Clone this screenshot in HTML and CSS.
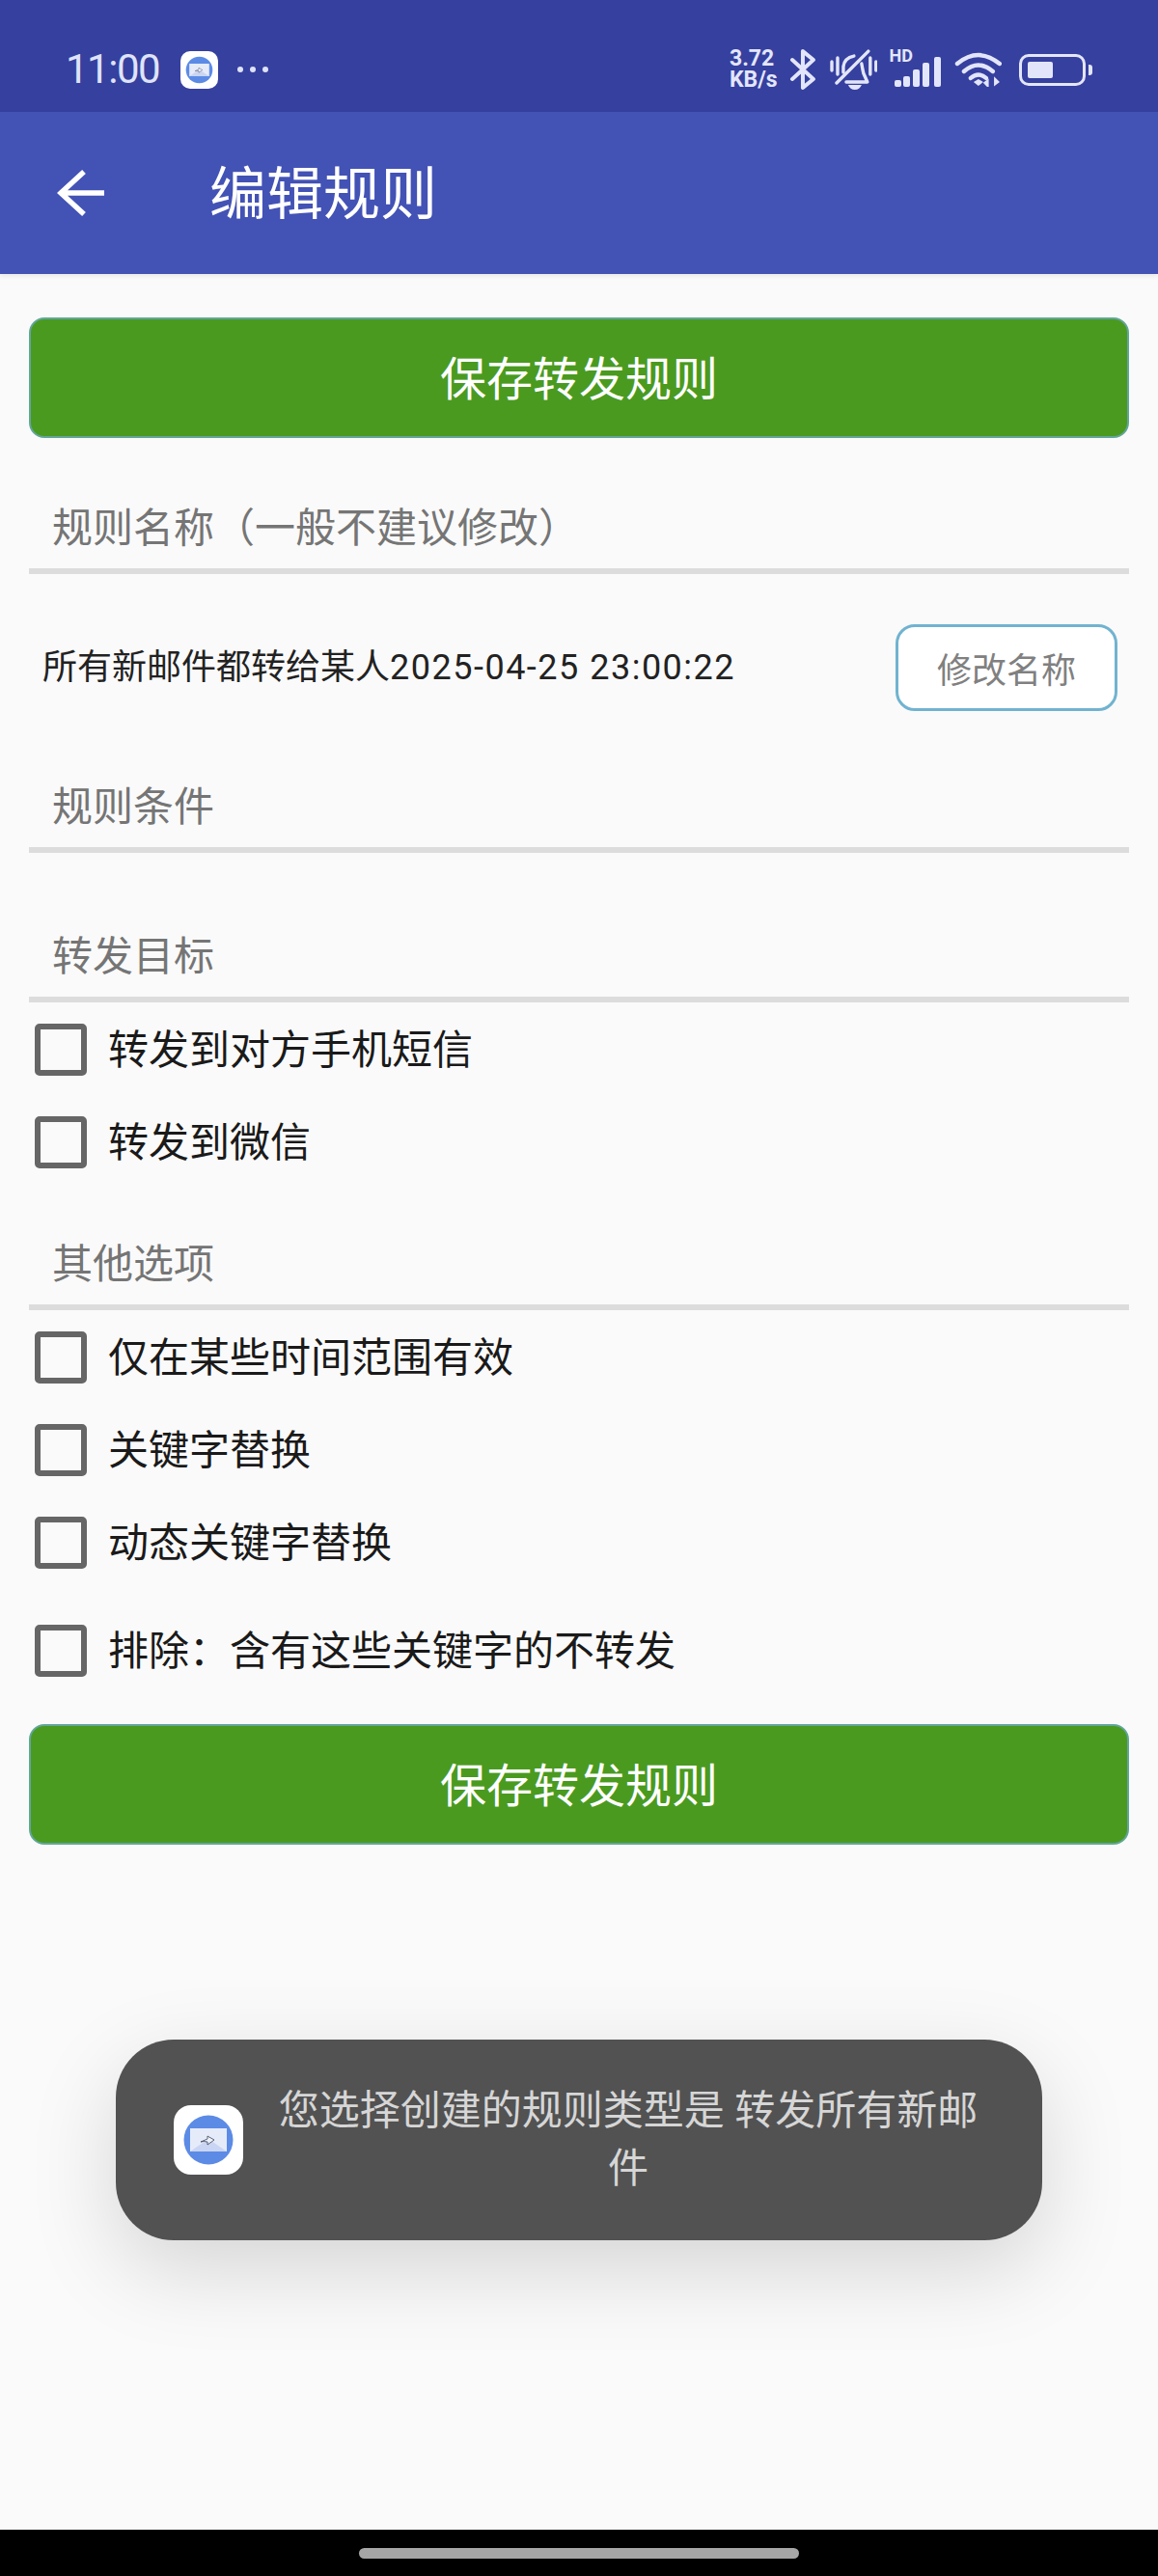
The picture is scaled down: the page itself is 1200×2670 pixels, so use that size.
FILE: index.html
```html
<!DOCTYPE html>
<html lang="zh-CN">
<head>
    <meta charset="UTF-8">
    <meta name="viewport" content="width=device-width, initial-scale=1.0">
    <title>编辑规则</title>
    <link rel="stylesheet" href="styles.css">
</head>
<body>
    <svg class="sprites" width="0" height="0">
        <symbol id="appLogo" viewBox="0 0 72 72">
            <circle cx="36" cy="36" r="25.5" fill="#5c8be6"/>
            <rect x="17" y="24" width="38" height="24" fill="#e6ebfa"/>
            <path d="M17 48 L36 35 L55 48 Z" fill="#c9d5f3"/>
            <path d="M28 38 L35 35 V32 L42 36 L35 41 V38 Q31 37 28 38 Z" fill="#eef2fc" stroke="#3c4258" stroke-width="0.8"/>
        </symbol>
    </svg>

    <div class="status-bar">
        <div class="status-left">
            <span class="clock">11:00</span>
            <span class="status-app"><svg width="39" height="39"><use href="#appLogo"/></svg></span>
            <span class="status-dots"><i></i><i></i><i></i></span>
        </div>
        <div class="status-right">
            <div class="net-speed"><span>3.72</span><span>KB/s</span></div>
            <svg class="ic-bt" width="28" height="42" viewBox="0 0 28 42">
                <path d="M3 11 L25 31 L14 40 V2 L25 11 L3 31" fill="none" stroke="#e3e6fa" stroke-width="4" stroke-linejoin="round" stroke-linecap="round"/>
            </svg>
            <svg class="ic-bell" width="50" height="42" viewBox="0 0 50 42">
                <g fill="none" stroke="#e3e6fa" stroke-width="3.4" stroke-linecap="round" stroke-linejoin="round">
                    <path d="M2 13 V22 M8 9 V26 M42 9 V26 M48 13 V22"/>
                    <path d="M7 35 L40 2"/>
                    <path d="M14 24 V18 Q15 9 25 7 M33 15 Q34 21 35 25 L39 34 H17"/>
                </g>
                <path d="M19 37 H33 Q31 42 26 42 Q21 42 19 37 Z" fill="#e3e6fa"/>
            </svg>
            <div class="signal">
                <span class="signal-hd">HD</span>
                <svg width="49" height="31" viewBox="0 0 49 31" fill="#e3e6fa">
                    <rect x="0" y="24" width="7" height="7" rx="2"/>
                    <rect x="9" y="20" width="7" height="11" rx="2"/>
                    <rect x="19" y="13" width="7" height="18" rx="2"/>
                    <rect x="29" y="6" width="7" height="25" rx="2"/>
                    <rect x="41" y="0" width="7" height="31" rx="2"/>
                </svg>
            </div>
            <svg class="ic-wifi" width="50" height="36" viewBox="0 0 50 36">
                <g fill="none" stroke="#e3e6fa" stroke-width="4.4" stroke-linecap="round">
                    <path d="M3 12 Q25 -6 47 12"/>
                    <path d="M10 20 Q25 7 40 20"/>
                    <path d="M17 27 Q25 20 33 27"/>
                </g>
                <path d="M20 31 L25 28 L30 31 L25 35 Z" fill="#e3e6fa"/>
                <path d="M35 36 V29 L31 32 Z M42 27 V34 L46 31 Z" fill="#e3e6fa" stroke="#e3e6fa" stroke-width="1.5"/>
            </svg>
            <div class="battery">
                <div class="battery-body"><div class="battery-fill"></div></div>
                <div class="battery-tip"></div>
            </div>
        </div>
    </div>

    <header class="app-bar">
        <svg class="back-arrow" width="50" height="50" viewBox="0 0 50 50">
            <path d="M3 25 H49 M28 3 L4 25 L28 47" fill="none" stroke="#fff" stroke-width="5.5"/>
        </svg>
        <h1>编辑规则</h1>
    </header>

    <main class="content">
        <button class="save-btn">保存转发规则</button>

        <div class="section-title first">规则名称（一般不建议修改）</div>
        <div class="name-row">
            <span class="rule-name">所有新邮件都转给某人<span class="rule-date">2025-04-25 23:00:22</span></span>
            <button class="rename-btn">修改名称</button>
        </div>

        <div class="section-title cond">规则条件</div>

        <div class="section-title target">转发目标</div>
        <ul class="check-list">
            <li class="check-row"><span class="box"></span><span class="check-label">转发到对方手机短信</span></li>
            <li class="check-row"><span class="box"></span><span class="check-label">转发到微信</span></li>
        </ul>

        <div class="section-title other">其他选项</div>
        <ul class="check-list">
            <li class="check-row"><span class="box"></span><span class="check-label">仅在某些时间范围有效</span></li>
            <li class="check-row"><span class="box"></span><span class="check-label">关键字替换</span></li>
            <li class="check-row"><span class="box"></span><span class="check-label">动态关键字替换</span></li>
            <li class="check-row exclude"><span class="box"></span><span class="check-label">排除：含有这些关键字的不转发</span></li>
        </ul>

        <button class="save-btn bottom">保存转发规则</button>
    </main>

    <div class="nav-bar"><div class="nav-pill"></div></div>

    <div class="toast">
        <span class="toast-icon"><svg width="72" height="72"><use href="#appLogo"/></svg></span>
        <p>您选择创建的规则类型是 转发所有新邮件</p>
    </div>
</body>
</html>
```

FILE: styles.css
```css
* {
    box-sizing: border-box;
}
body {
    position: relative;
    display: flex;
    flex-direction: column;
    width: 1200px;
    height: 2670px;
    margin: 0;
    overflow: hidden;
    background: #fafafa;
    color: #1a1a1a;
    font-family: Roboto, "Noto Sans CJK SC", sans-serif;
}
.sprites {
    position: absolute;
}

/* status bar */
.status-bar {
    display: flex;
    justify-content: space-between;
    align-items: center;
    height: 116px;
    padding: 28px 68px 0 68px;
    background: #36409f;
    color: #e3e6fa;
}
.status-left {
    display: flex;
    align-items: center;
}
.clock {
    font-size: 42px;
    line-height: 50px;
    letter-spacing: -1.5px;
    color: #dfe3f8;
}
.status-app {
    display: flex;
    width: 39px;
    height: 39px;
    margin-left: 22px;
    background: #fff;
    border-radius: 10px;
}
.status-dots {
    display: flex;
    gap: 7px;
    margin-left: 20px;
}
.status-dots i {
    width: 6px;
    height: 6px;
    background: #dfe3f8;
    border-radius: 50%;
}
.status-right {
    display: flex;
    align-items: center;
    width: 376px;
}
.net-speed {
    display: flex;
    flex-direction: column;
    width: 51px;
    font-size: 23px;
    font-weight: 700;
    line-height: 22px;
}
.ic-bt {
    margin-left: 11px;
}
.ic-bell {
    margin-left: 14px;
}
.signal {
    display: flex;
    align-items: flex-end;
    position: relative;
    width: 55px;
    height: 36px;
    margin-left: 12px;
    justify-content: flex-end;
}
.signal-hd {
    position: absolute;
    left: 0;
    top: -4px;
    font-size: 18px;
    font-weight: 700;
    line-height: 16px;
}
.ic-wifi {
    margin-left: 13px;
}
.battery {
    display: flex;
    align-items: center;
    margin-left: 17px;
}
.battery-body {
    width: 69px;
    height: 33px;
    padding: 5px 6px;
    border: 3px solid #e3e6fa;
    border-radius: 10px;
}
.battery-fill {
    width: 26px;
    height: 100%;
    background: #e3e6fa;
    border-radius: 2px;
}
.battery-tip {
    width: 4px;
    height: 11px;
    margin-left: 3px;
    background: #e3e6fa;
    border-radius: 0 3px 3px 0;
}

/* app bar */
.app-bar {
    display: flex;
    align-items: center;
    height: 168px;
    padding-left: 59px;
    background: #4352b5;
    box-shadow: 0 2px 5px rgba(0, 0, 0, 0.08);
}
.app-bar h1 {
    margin: 4px 0 0 108px;
    font-size: 59px;
    font-weight: 400;
    line-height: 80px;
    color: #fff;
}

/* form */
.content {
    flex: 1;
    padding: 45px 30px 0;
}
.save-btn {
    display: block;
    width: 100%;
    height: 125px;
    padding: 0 0 6px;
    font-family: inherit;
    font-size: 48px;
    color: #fff;
    background: #4a9a20;
    border: 2px solid #62a69a;
    border-radius: 16px;
}
.save-btn.bottom {
    margin-top: 30px;
}
.section-title {
    height: 78px;
    padding-left: 24px;
    font-size: 42px;
    line-height: 62px;
    color: #757575;
    border-bottom: 6px solid #dcdcdc;
}
.section-title.first {
    margin-top: 63px;
}
.section-title.cond {
    margin-top: 69px;
}
.section-title.target {
    margin-top: 77px;
}
.section-title.other {
    margin-top: 50px;
}
.name-row {
    display: flex;
    justify-content: space-between;
    align-items: center;
    margin-top: 52px;
    padding: 0 12px 0 14px;
}
.rule-name {
    font-size: 36px;
    line-height: 50px;
    color: #222;
}
.rule-date {
    letter-spacing: 1.5px;
}
.rename-btn {
    width: 230px;
    height: 90px;
    padding: 0;
    font-family: inherit;
    font-size: 36px;
    color: #808080;
    background: #fff;
    border: 3px solid #71b3d0;
    border-radius: 20px;
}
.check-list {
    display: flex;
    flex-direction: column;
    gap: 4px;
    margin: 0;
    padding: 3px 0 0;
    list-style: none;
}
.check-row {
    display: flex;
    align-items: center;
    height: 92px;
    padding-left: 6px;
    font-size: 42px;
    color: #1a1a1a;
}
.check-row.exclude {
    margin-top: 16px;
}
.check-label {
    margin-bottom: 7px;
}
.box {
    flex-shrink: 0;
    width: 54px;
    height: 54px;
    margin-right: 22px;
    border: 6px solid #666;
    border-radius: 5px;
}

/* nav bar */
.nav-bar {
    display: flex;
    justify-content: center;
    height: 48px;
    padding-top: 19px;
    background: #000;
}
.nav-pill {
    width: 456px;
    height: 11px;
    background: #a6a6a6;
    border-radius: 6px;
}

/* toast lies over the form */
.toast {
    position: absolute;
    left: 120px;
    top: 2114px;
    display: flex;
    align-items: center;
    width: 960px;
    height: 208px;
    padding-left: 60px;
    background: #525252;
    border-radius: 60px;
    box-shadow: 0 30px 90px rgba(0, 0, 0, 0.15);
}
.toast-icon {
    display: flex;
    flex-shrink: 0;
    width: 72px;
    height: 72px;
    background: #fff;
    border-radius: 18px;
}
.toast p {
    width: 740px;
    margin: 0 0 0 29px;
    font-size: 42px;
    line-height: 60px;
    text-align: center;
    color: #d6d6d6;
}
```
